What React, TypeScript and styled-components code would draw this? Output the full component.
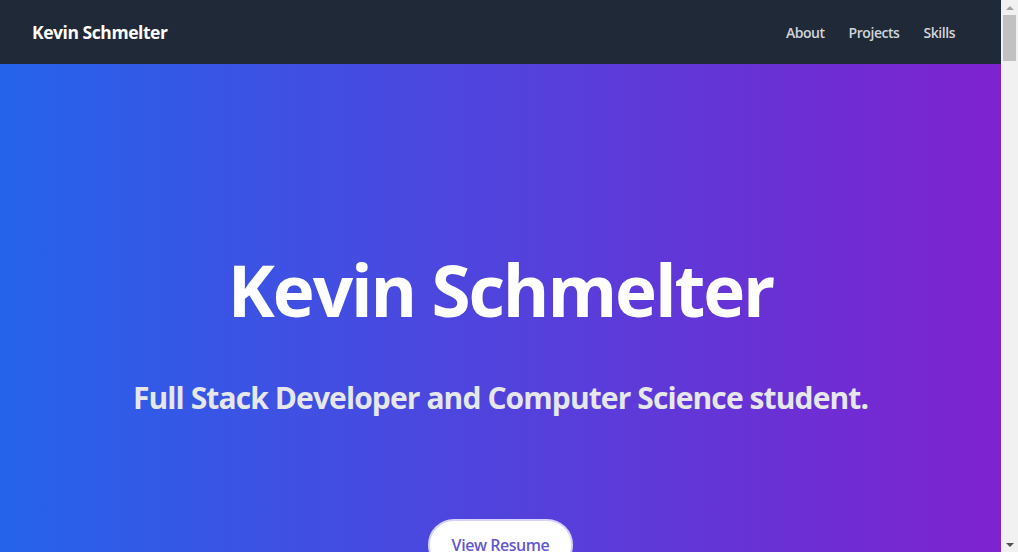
import React from "react";
import styled, { createGlobalStyle } from "styled-components";

const Global = createGlobalStyle`
  html, body { margin: 0; padding: 0; height: 100%; overflow: hidden; }
  body { font-family: "Open Sans", "Noto Sans", sans-serif; }
  #root { height: 100%; }
`;

const Window = styled.div`
  display: flex;
  width: 100%;
  height: 552px;
  overflow: hidden;
`;

const Page = styled.div`
  flex: 1;
  min-width: 0;
  display: flex;
  flex-direction: column;
`;

const Header = styled.header`
  height: 64px;
  flex-shrink: 0;
  background: #1f2937;
  display: flex;
  align-items: center;
  justify-content: space-between;
  padding: 0 34px 0 32px;
`;

const Brand = styled.a`
  color: #ffffff;
  font-size: 17.5px;
  font-weight: 700;
  letter-spacing: -0.45px;
  text-decoration: none;
`;

const Nav = styled.nav`
  display: flex;
  align-items: center;
`;

const NavLink = styled.a`
  color: #d1d5db;
  font-size: 14px;
  font-weight: 600;
  letter-spacing: -0.45px;
  padding: 0 12px;
  text-decoration: none;
`;

const Hero = styled.section`
  flex: 1;
  background: linear-gradient(to right, #2563eb, #7e22ce);
  display: flex;
  flex-direction: column;
  align-items: center;
  padding-top: 190px;
  color: #ffffff;
  text-align: center;
`;

const Title = styled.h1`
  margin: 0 0 54px;
  font-size: 71px;
  line-height: 72px;
  font-weight: 700;
  letter-spacing: -2.1px;
`;

const Subtitle = styled.p`
  margin: 0 0 103px;
  font-size: 30px;
  line-height: 36px;
  font-weight: 700;
  letter-spacing: -0.9px;
  color: #e5e7eb;
`;

const ResumeButton = styled.a`
  display: inline-block;
  background: #ffffff;
  color: #6557d2;
  font-size: 16px;
  line-height: 24px;
  font-weight: 600;
  letter-spacing: -0.45px;
  padding: 12px 22px;
  border-radius: 9999px;
  border: 2px solid #d6d2fb;
  text-decoration: none;
`;

const ScrollTrack = styled.div`
  width: 17px;
  flex-shrink: 0;
  background: #f1f1f1;
  display: flex;
  flex-direction: column;
  align-items: center;
`;

const Arrow = styled.div<{ $down?: boolean }>`
  width: 0;
  height: 0;
  margin: 6px 0 5px;
  border-left: 4px solid transparent;
  border-right: 4px solid transparent;
  ${(p) => (p.$down ? "border-top: 4px solid #505050;" : "border-bottom: 4px solid #a3a3a3;")}
`;

const Thumb = styled.div`
  width: 13px;
  height: 46px;
  background: #c1c1c1;
`;

const Spacer = styled.div`
  flex: 1;
`;

export default function App() {
  return (
    <>
      <Global />
      <Window>
        <Page>
          <Header>
            <Brand href="#">Kevin Schmelter</Brand>
            <Nav>
              <NavLink href="#about">About</NavLink>
              <NavLink href="#projects">Projects</NavLink>
              <NavLink href="#skills">Skills</NavLink>
            </Nav>
          </Header>
          <Hero>
            <Title>Kevin Schmelter</Title>
            <Subtitle>Full Stack Developer and Computer Science student.</Subtitle>
            <ResumeButton href="#">View Resume</ResumeButton>
          </Hero>
        </Page>
        <ScrollTrack>
          <Arrow />
          <Thumb />
          <Spacer />
          <Arrow $down />
        </ScrollTrack>
      </Window>
    </>
  );
}
